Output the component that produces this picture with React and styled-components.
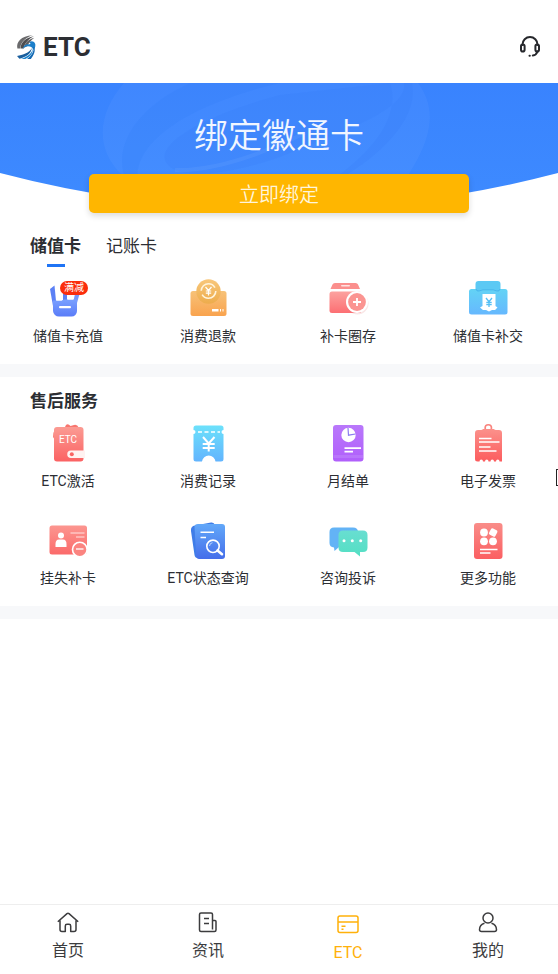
import styled, { createGlobalStyle } from "styled-components";

const Fade = ({ id, from, to }) => (
  <linearGradient id={id} x1="0" y1="0" x2="0" y2="1">
    <stop offset="0" stopColor={from} />
    <stop offset="1" stopColor={to} />
  </linearGradient>
);

const Logo = () => (
  <svg width="20" height="26" viewBox="0 0 58 72" fill="none" aria-hidden="true">
    <path d="M4 40C0 22 14 4 48 2C30 8 14 20 12 40Z" fill="#6a6a6c" />
    <path d="M13 40C14 24 26 10 52 5C36 13 25 25 22 40Z" fill="#4c4c4f" />
    <path d="M23 38C25 26 34 14 53 9C43 17 36 25 33 34Z" fill="#5f5f62" />
    <path d="M38 22C46 17 54 20 56 28C57 36 54 41 50 45C49 38 44 34 34 34C27 34 24 37 19 43C21 33 27 28 35 28C42 28 45 26 38 22Z" fill="#1b7fca" />
    <path d="M46 37C44 48 29 58 3 62L10 70C30 65 45 56 46 37Z" fill="#1a5f9e" />
    <path d="M48 38C49 52 36 63 15 71H27C42 63 51 53 48 38Z" fill="#1783d0" />
    <path d="M50 36C54 49 44 62 32 71H43C52 60 57 47 53 36Z" fill="#1469b3" />
  </svg>
);

const HeadsetIcon = () => (
  <svg width="24" height="24" viewBox="0 0 24 24" fill="none" stroke="#26282c" strokeWidth="2" strokeLinecap="round" aria-hidden="true">
    <path d="M4.500 10V9.500A7.500 7.500 0 0 1 19.500 9.500V10" />
    <rect x="3" y="9.500" width="3.600" height="7" rx="1.800" />
    <rect x="17.400" y="9.500" width="3.600" height="7" rx="1.800" />
    <path d="M19.500 16.500C18.700 19 17 20.200 14.800 20.600M11.500 20.800H11.800" />
  </svg>
);

const RechargeIcon = () => (
  <svg viewBox="0 0 48 48" aria-hidden="true">
    <defs><Fade id="recharge" from="#7aa0ff" to="#5a7cf8" /></defs>
    <path d="M6 14L10.500 10.500L12 26L9 31Z" fill="#5b80f5" />
    <path d="M19 11H23V27H19Z" fill="#5b80f5" />
    <path d="M31 19H35.500L33 28H29Z" fill="#7796f8" />
    <path d="M9 25.500H17C19 25.500 19 24.500 20 24.500H33V36A5.500 5.500 0 0 1 27.500 41.500H15A6 6 0 0 1 9 36Z" fill="url(#recharge)" />
    <path d="M12 20L18 18V25.500H12.500ZM24 19H30L29 24.500H24Z" fill="#fff" />
    <rect x="15" y="31" width="12" height="2.200" rx="1" fill="#fff" />
  </svg>
);

const RefundIcon = () => (
  <svg viewBox="0 0 48 48" aria-hidden="true">
    <defs>
      <Fade id="refund" from="#f7c278" to="#f9a34e" />
      <Fade id="refundCoin" from="#f8c77b" to="#edac4c" />
    </defs>
    <path d="M9 16H40A2.500 2.500 0 0 1 42.500 18.500V38.500A2.500 2.500 0 0 1 40 41H9A2.500 2.500 0 0 1 6.500 38.500V18.500A2.500 2.500 0 0 1 9 16Z" fill="url(#refund)" />
    <circle cx="24.500" cy="16.500" r="12.200" fill="url(#refundCoin)" />
    <circle cx="24.500" cy="16" r="7.300" fill="none" stroke="#fff4dc" strokeWidth="1.600" strokeDasharray="19 4" />
    <path d="M21.500 12L24.500 15.500L27.500 12M24.500 15.500V20.500M21.800 16H27.200M21.800 18.200H27.200" fill="none" stroke="#fff" strokeWidth="1.200" />
    <path d="M28 35.200H34.500M36 35.200H37M38.500 35.200H39.500" stroke="#fff" strokeWidth="2.400" />
  </svg>
);

const TopUpIcon = () => (
  <svg viewBox="0 0 48 48" aria-hidden="true">
    <defs><Fade id="topUp" from="#fca29f" to="#fc6f73" /></defs>
    <path d="M6.500 14L8.500 9.500Q9 8 11 8H31.500Q33.500 8 34 9.500L36 14Z" fill="#fb8f8d" />
    <rect x="17" y="10" width="9" height="1.600" rx=".8" fill="#ffe3e1" />
    <rect x="5.500" y="16.500" width="32" height="21.500" rx="2.500" fill="url(#topUp)" />
    <circle cx="33.500" cy="28.500" r="11" fill="#d77" opacity=".18" />
    <circle cx="33" cy="27" r="11" fill="#fff" />
    <circle cx="33" cy="27" r="8.900" fill="#fb9491" />
    <path d="M29 27H37M33 23V31" stroke="#fff" strokeWidth="1.800" />
  </svg>
);

const RepayIcon = () => (
  <svg viewBox="0 0 48 48" aria-hidden="true">
    <defs><Fade id="repay" from="#63d3f5" to="#66b8fe" /></defs>
    <rect x="5" y="14" width="38.500" height="25.500" rx="2.500" fill="url(#repay)" />
    <path d="M14.500 6H33.500Q36.500 6 36.500 9V14Q36 17 33 16L29 14.500H19L15 16Q12 17 11.500 14V9Q11.500 6 14.500 6Z" fill="#5cc9f4" />
    <path d="M12 14Q12.500 16.500 15 16L19 14.800H29L33 16Q35.500 16.500 36 14" fill="none" stroke="#42aeea" strokeWidth=".8" />
    <path d="M18.500 19H31.500V31L33.500 32.500L31 35H28L25 36.500L22 35H19L16 32.500L18.500 31Z" fill="#fff" />
    <path d="M22 23L25 26.700L28 23M25 26.500V32M22.300 27.300H27.700M22.300 29.500H27.700" fill="none" stroke="#54bff5" strokeWidth="1.300" />
  </svg>
);

const ActivateIcon = () => (
  <svg viewBox="0 0 48 48" aria-hidden="true">
    <defs><Fade id="activate" from="#fb9b93" to="#fb6263" /></defs>
    <path d="M20 9L22 5Q24 3 26.500 6L30 5Q33 4 35 8V10H20Z" fill="#f8766f" />
    <path d="M9 17Q9 8 15 8L18 12L11 20Z" fill="#f77d76" />
    <rect x="10" y="7" width="29.500" height="34.500" rx="3" fill="url(#activate)" />
    <text x="24" y="23" textAnchor="middle" fontFamily="Roboto, sans-serif" fontSize="10" fill="#fff">ETC</text>
    <path d="M27 30.500H41V38H27A3.700 3.700 0 0 1 27 30.500Z" fill="#fff2f1" />
    <circle cx="27.800" cy="34.200" r="2" fill="#f96362" />
  </svg>
);

const RecordIcon = () => (
  <svg viewBox="0 0 48 48" aria-hidden="true">
    <defs><Fade id="record" from="#6ce1fb" to="#62b4fe" /></defs>
    <path d="M12 5.500H37Q39.500 5.500 39.500 8V10A2 2 0 0 0 39.500 14V39Q39.500 41.500 37 41.500H31.500A6.800 6.800 0 0 0 18 41.500H12Q9.500 41.500 9.500 39V14A2 2 0 0 0 9.500 10V8Q9.500 5.500 12 5.500Z" fill="url(#record)" />
    <path d="M14 12H36" stroke="#fff" strokeWidth="1.300" strokeDasharray="4 2.500" />
    <path d="M19 17L24.700 23.500L30.500 17M24.700 23V31.500M18.700 24H30.700M18.700 28H30.700" fill="none" stroke="#fff" strokeWidth="2" />
  </svg>
);

const MonthlyIcon = () => (
  <svg viewBox="0 0 48 48" aria-hidden="true">
    <defs><Fade id="monthly" from="#b978fb" to="#b05ffb" /></defs>
    <rect x="9" y="5" width="30.500" height="36.500" rx="3" fill="url(#monthly)" />
    <path d="M9.500 36.500H39" stroke="#be82fc" strokeWidth="3" opacity=".6" />
    <circle cx="24.500" cy="15" r="7.200" fill="#fff" />
    <path d="M24 8L24.500 15.200L31.500 14" fill="none" stroke="#8c7df0" strokeWidth="1.200" />
    <path d="M20.500 28.200H37M20.500 31.700H29" stroke="#fff" strokeWidth="1.700" />
  </svg>
);

const InvoiceIcon = () => (
  <svg viewBox="0 0 48 48" aria-hidden="true">
    <defs><Fade id="invoice" from="#fb918b" to="#fc5c5e" /></defs>
    <circle cx="24.300" cy="8" r="3.200" fill="none" stroke="#f9837d" strokeWidth="1.600" />
    <path d="M14 10H17Q18.500 10 19 9H30Q30.500 10 32 10H35Q38 10 38 13V41.500H35.500A1.600 1.800 0 0 0 32 41.500H30A1.600 1.800 0 0 0 26.500 41.500H24.500A1.600 1.800 0 0 0 21 41.500H19A1.600 1.800 0 0 0 15.500 41.500H13.500Q11 41.500 11 39V13Q11 10 14 10Z" fill="url(#invoice)" />
    <path d="M15 18.500H27.500M15 22H35.500M15 27H26.500M15 31H32.500" stroke="#fff" strokeWidth="1.600" />
  </svg>
);

const LostCardIcon = () => (
  <svg viewBox="0 0 48 48" aria-hidden="true">
    <defs><Fade id="lostCard" from="#fc9690" to="#fb6a6a" /></defs>
    <rect x="5.500" y="8.500" width="37.500" height="29" rx="2.500" fill="url(#lostCard)" />
    <circle cx="17" cy="18.500" r="3" fill="#fff" />
    <path d="M11.500 30V27Q11.500 22.500 15 22.500H19Q22.500 22.500 22.500 27V30Z" fill="#fff" />
    <path d="M26.500 16H40.500M32 20H40.500" stroke="#ffe4e1" strokeWidth="1.200" />
    <circle cx="35.800" cy="32.500" r="7.300" fill="#fb8480" stroke="#fff" strokeWidth="1.600" />
    <path d="M32 32H39.500" stroke="#fff" strokeWidth="1.300" />
  </svg>
);

const StatusIcon = () => (
  <svg viewBox="0 0 48 48" aria-hidden="true">
    <defs><Fade id="status" from="#62a8f9" to="#456eea" /></defs>
    <path d="M7 14Q6.500 9 11 8.500L27 5.500Q30 5 31 8L20 41L13.500 41Q11 41 10.500 38Z" fill="#3f7de8" />
    <path d="M14 7H38Q41 7 41 10V39Q41 42 38 42H15Q12.500 42 12.200 39L10.500 10Q10.500 7 14 7Z" fill="url(#status)" />
    <path d="M16.500 15.300H30M16.500 20.500H22" stroke="#fff" strokeWidth="1.600" />
    <circle cx="29" cy="29.300" r="6.200" fill="none" stroke="#fff" strokeWidth="1.600" />
    <path d="M25.500 29A3.500 3.500 0 0 1 28.500 25.700" fill="none" stroke="#b9d4ff" strokeWidth="1" />
    <path d="M33.500 33.500L38 37.200" stroke="#fff" strokeWidth="2.600" strokeLinecap="round" />
  </svg>
);

const ChatIcon = () => (
  <svg viewBox="0 0 48 48" aria-hidden="true">
    <defs><Fade id="chat" from="#68ded1" to="#54dfc3" /></defs>
    <path d="M10 10.500H29Q34 10.500 34 15V30H15L10.500 34L10 30.500Q5.500 30 5.500 26V15Q5.500 10.500 10 10.500Z" fill="#63b3f6" />
    <path d="M19 13.500H39Q43.500 13.500 43.500 18V30.500Q43.500 35 39 35H36V39.500L30.500 35H19Q14.500 35 14.500 30.500V18Q14.500 13.500 19 13.500Z" fill="url(#chat)" />
    <circle cx="20" cy="23.700" r="1.500" fill="#fff" />
    <circle cx="28.300" cy="23.700" r="1.500" fill="#fff" />
    <circle cx="36.700" cy="23.700" r="1.500" fill="#fff" />
  </svg>
);

const MoreIcon = () => (
  <svg viewBox="0 0 48 48" aria-hidden="true">
    <defs><Fade id="more" from="#f98d89" to="#fb5f62" /></defs>
    <rect x="10" y="6" width="28.500" height="36" rx="3" fill="url(#more)" />
    <circle cx="20" cy="15.500" r="3.900" fill="#fff" />
    <rect x="25.700" y="12" width="7" height="7" rx="1.500" fill="#fff" transform="rotate(28 29.200 15.500)" />
    <circle cx="20" cy="24.300" r="3.900" fill="#fff" />
    <circle cx="29" cy="24.300" r="3.900" fill="#fff" />
    <path d="M16 32.500H33.500M16 36H26.500" stroke="#fff" strokeWidth="1.500" />
  </svg>
);

const HomeIcon = () => (
  <svg viewBox="0 0 22 22" aria-hidden="true">
    <path d="M.8 9.700L10 1.600Q11 .9 12 1.600L21.200 9.700M3 8.500V17.500Q3 19.500 5 19.500H8.300V14Q8.300 12.300 10 12.300H12Q13.700 12.300 13.700 14V19.500H17Q19 19.500 19 17.500V8.500" />
  </svg>
);

const NewsIcon = () => (
  <svg viewBox="0 0 22 22" aria-hidden="true">
    <path d="M15.500 19.500H4Q2.500 19.500 2.500 18V2.500Q2.500 1 4 1H14Q15.500 1 15.500 2.500V17.500M15.500 8.500H18Q19 8.500 19 9.500V18Q19 19.500 17.500 19.500H15.500M7 6.500H12M7 11.500H12" />
  </svg>
);

const CardIcon = () => (
  <svg viewBox="0 0 24 24" aria-hidden="true">
    <rect x="2" y="4" width="20" height="16.500" rx="2" />
    <path d="M2 10H22M5.500 14.300H9.500M5.500 17.300H7.500" />
  </svg>
);

const MineIcon = () => (
  <svg viewBox="0 0 22 22" aria-hidden="true">
    <circle cx="11" cy="6" r="5" />
    <path d="M7.500 11.300Q2.700 12.500 2.500 17.500Q2.500 19.500 4.500 19.500H17.500Q19.500 19.500 19.500 17.500Q19.300 12.500 14.500 11.300" />
  </svg>
);

const cardServices = [
  { name: "储值卡充值", icon: <RechargeIcon />, badge: "满减" },
  { name: "消费退款", icon: <RefundIcon /> },
  { name: "补卡圈存", icon: <TopUpIcon /> },
  { name: "储值卡补交", icon: <RepayIcon /> },
];

const afterSales = [
  { name: "ETC激活", icon: <ActivateIcon /> },
  { name: "消费记录", icon: <RecordIcon /> },
  { name: "月结单", icon: <MonthlyIcon /> },
  { name: "电子发票", icon: <InvoiceIcon /> },
  { name: "挂失补卡", icon: <LostCardIcon /> },
  { name: "ETC状态查询", icon: <StatusIcon /> },
  { name: "咨询投诉", icon: <ChatIcon /> },
  { name: "更多功能", icon: <MoreIcon /> },
];

const navItems = [
  { name: "首页", icon: <HomeIcon /> },
  { name: "资讯", icon: <NewsIcon /> },
  { name: "ETC", icon: <CardIcon />, active: true },
  { name: "我的", icon: <MineIcon /> },
];

const Services = ({ items }) => (
  <ServiceGrid>
    {items.map((item) => (
      <Service key={item.name} href="#">
        <ServiceIcon>
          {item.icon}
          {item.badge && <Badge>{item.badge}</Badge>}
        </ServiceIcon>
        <span>{item.name}</span>
      </Service>
    ))}
  </ServiceGrid>
);

const App = () => {
  return (
    <>
      <GlobalStyle />
      <Page>
        <Header>
          <Brand>
            <Logo />
            <h1>ETC</h1>
          </Brand>
          <IconButton aria-label="客服">
            <HeadsetIcon />
          </IconButton>
        </Header>
        <Banner>
          <BannerArt viewBox="0 0 558 130" preserveAspectRatio="none" aria-hidden="true">
            <defs>
              <Fade id="banner" from="#3983fe" to="#3e8bff" />
              <clipPath id="curve">
                <path d="M0 0H558V90Q279 163 0 90Z" />
              </clipPath>
            </defs>
            <g clipPath="url(#curve)">
              <rect width="558" height="130" fill="url(#banner)" />
              <path d="M124 0C98 30 94 65 122 92L150 130H380C425 75 444 35 418 0Z" fill="#fff" opacity=".04" />
              <path d="M190 0C135 25 112 65 126 98L138 100C132 65 175 25 280 0Z" fill="#2f78f5" opacity=".18" />
              <path d="M280 12C205 32 150 62 168 82C182 98 240 90 290 70C350 46 408 25 404 0H412C420 40 370 80 335 98L310 112C370 75 402 35 390 0Z" fill="#2f78f5" opacity=".16" />
              <path d="M175 87C215 88 260 72 305 50" stroke="#fff" strokeWidth="4" fill="none" opacity=".05" />
            </g>
          </BannerArt>
          <h2>绑定徽通卡</h2>
          <BindButton>立即绑定</BindButton>
        </Banner>
        <Section>
          <Tabs role="tablist">
            <Tab role="tab" aria-selected="true" $active>储值卡</Tab>
            <Tab role="tab" aria-selected="false">记账卡</Tab>
          </Tabs>
          <Services items={cardServices} />
        </Section>
        <Section $titled>
          <h3>售后服务</h3>
          <Services items={afterSales} />
        </Section>
        <BottomNav>
          {navItems.map((item) => (
            <NavLink key={item.name} href="#" $active={item.active}>
              {item.icon}
              <span>{item.name}</span>
            </NavLink>
          ))}
        </BottomNav>
        <EdgeHandle />
      </Page>
    </>
  );
};

const GlobalStyle = createGlobalStyle`
  * {
    box-sizing: border-box;
    margin: 0;
    padding: 0;
  }

  body {
    background-color: #fff;
    color: #2c2e33;
    font-family: Roboto, "Noto Sans CJK SC", sans-serif;
  }

  a {
    color: inherit;
    text-decoration: none;
  }

  button {
    border: none;
    background: none;
    color: inherit;
    font-family: inherit;
    cursor: pointer;
  }
`;

const Page = styled.div`
  position: relative;
  min-height: 100vh;
  display: flex;
  flex-direction: column;
  overflow-x: hidden;
`;

const Header = styled.header`
  display: flex;
  align-items: center;
  justify-content: space-between;
  padding: 30px 16px 19px;
`;

const Brand = styled.div`
  display: flex;
  align-items: center;
  gap: 7px;

  h1 {
    font-size: 26px;
    line-height: 34px;
    font-weight: 700;
  }
`;

const IconButton = styled.button`
  display: flex;
`;

const Banner = styled.section`
  position: relative;
  display: flex;
  flex-direction: column;
  align-items: center;
  gap: 18px;
  padding-top: 33px;

  h2 {
    position: relative;
    color: #f1f6ff;
    font-size: 34px;
    line-height: 40px;
    font-weight: 350;
  }
`;

const BannerArt = styled.svg`
  position: absolute;
  inset: 0;
  width: 100%;
  height: 100%;
`;

const BindButton = styled.button`
  position: relative;
  width: 68%;
  height: 39px;
  border-radius: 5px;
  background-color: #ffb600;
  box-shadow: 0 3px 6px rgba(0, 0, 0, 0.14);
  color: #fff5dc;
  font-size: 20px;
  font-weight: 350;
`;

const Section = styled.section`
  padding: ${({ $titled }) => ($titled ? "12px 0 18px" : "21px 0 18px")};
  border-bottom: 13px solid #f7f8fa;

  h3 {
    margin-bottom: 7px;
    padding: 0 30px;
    font-size: 17px;
    line-height: 24px;
    font-weight: 700;
  }
`;

const Tabs = styled.div`
  display: flex;
  gap: 25px;
  margin-bottom: 8px;
  padding: 0 30px;
`;

const Tab = styled.button`
  display: flex;
  flex-direction: column;
  align-items: center;
  gap: 6px;
  font-size: 17px;
  line-height: 24px;
  font-weight: ${({ $active }) => ($active ? 700 : 400)};

  &::after {
    content: "";
    width: 18px;
    height: 3px;
    background-color: ${({ $active }) => ($active ? "#1f74f5" : "transparent")};
  }
`;

const ServiceGrid = styled.div`
  display: grid;
  grid-template-columns: repeat(4, 1fr);
  row-gap: 26px;
  margin: 0 0 0 -2px;
`;

const Service = styled.a`
  display: flex;
  flex-direction: column;
  align-items: center;
  gap: 3px;
  font-size: 14px;
  line-height: 20px;
`;

const ServiceIcon = styled.div`
  position: relative;
  width: 48px;
  height: 48px;
`;

const Badge = styled.span`
  position: absolute;
  top: 6px;
  left: 16px;
  padding: 0 4px;
  border-radius: 7px;
  background-color: #fb2d0b;
  color: #fff;
  font-size: 10px;
  line-height: 14px;
  white-space: nowrap;
`;

const BottomNav = styled.nav`
  display: grid;
  grid-template-columns: repeat(4, 1fr);
  margin: auto 0 0 -2px;
  padding: 7px 0 11px;
  border-top: 1px solid #eee;
`;

const NavLink = styled.a`
  display: flex;
  flex-direction: column;
  align-items: center;
  gap: 7px;
  color: ${({ $active }) => ($active ? "#ffb10a" : "#3c3c3e")};
  font-size: 16px;
  line-height: 20px;

  svg {
    width: ${({ $active }) => ($active ? 24 : 22)}px;
    fill: none;
    stroke: currentColor;
    stroke-width: 1.5;
    stroke-linejoin: round;
  }
`;

const EdgeHandle = styled.div`
  position: absolute;
  top: 469px;
  right: 0;
  width: 2px;
  height: 17px;
  border: 1px solid #222;
  border-right: none;
`;

export default App;
